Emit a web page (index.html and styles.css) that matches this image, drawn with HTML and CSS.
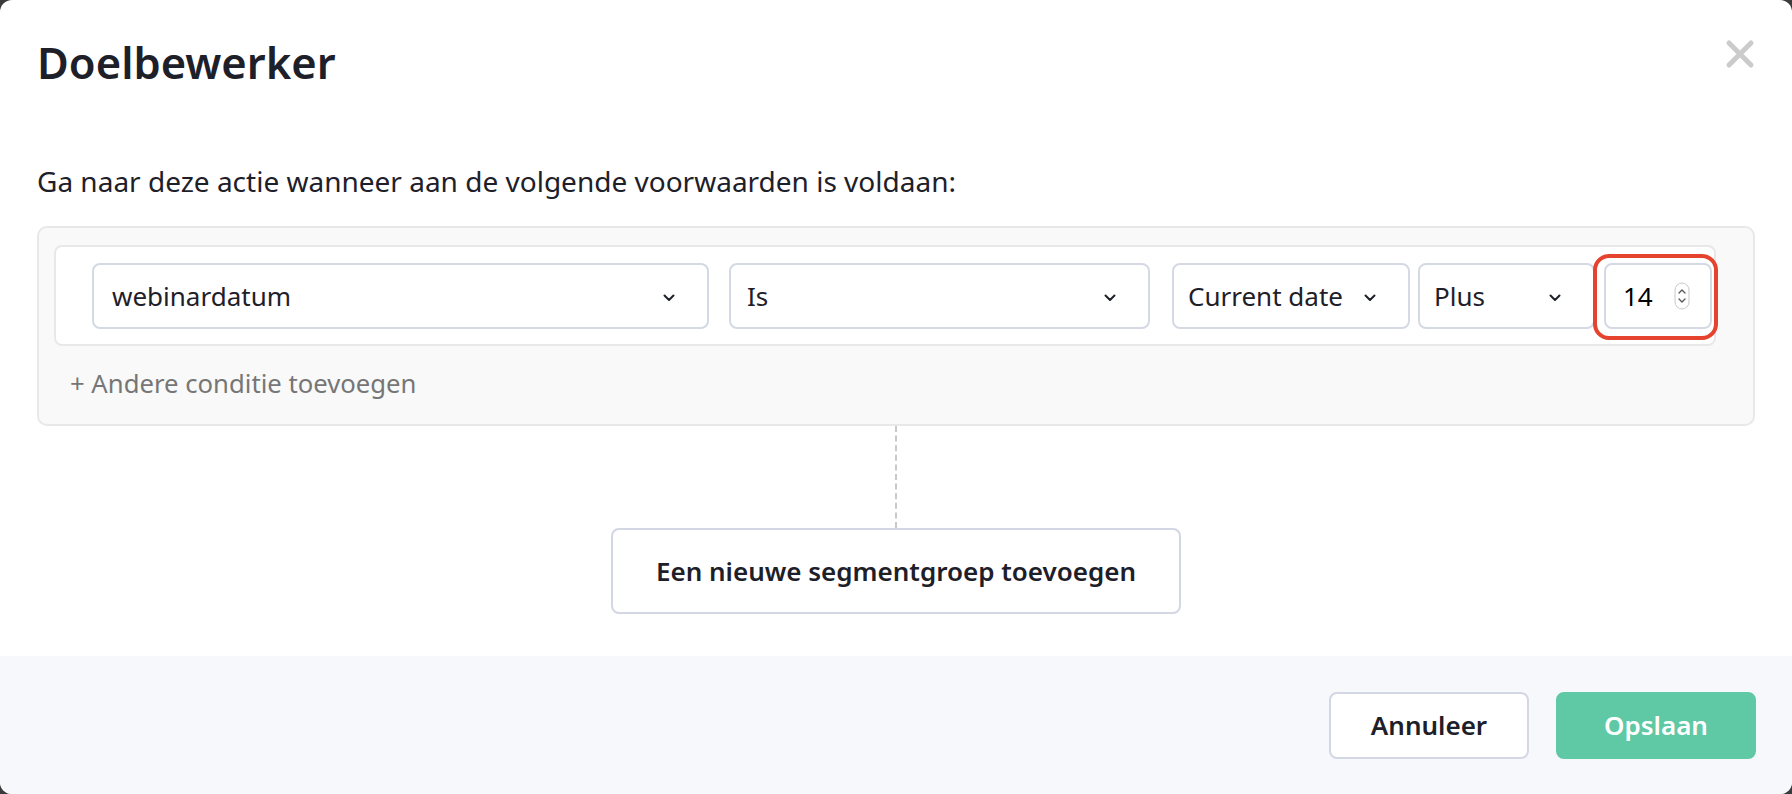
FILE: index.html
```html
<!DOCTYPE html>
<html lang="nl">
<head>
    <meta charset="UTF-8">
    <meta name="viewport" content="width=device-width, initial-scale=1.0">
    <title>Doelbewerker</title>
    <link rel="stylesheet" href="styles.css">
</head>
<body>
    <div class="modal">
        <div class="modal-body">
            <div class="modal-head">
                <h2>Doelbewerker</h2>
                <button class="close" title="Sluiten">
                    <svg width="30" height="30" viewBox="0 0 30 30"><path d="M4 4 L26 26 M26 4 L4 26" stroke="#cbcbcb" stroke-width="5" stroke-linecap="round" fill="none"/></svg>
                </button>
            </div>
            <p class="intro">Ga naar deze actie wanneer aan de volgende voorwaarden is voldaan:</p>

            <div class="group">
                <div class="cond-row">
                    <div class="pick pick-field">
                        <span>webinardatum</span>
                        <svg class="chev" width="12" height="8" viewBox="0 0 12 8"><path d="M1.5 1.5 L6 6 L10.5 1.5"/></svg>
                    </div>
                    <div class="pick pick-op">
                        <span>Is</span>
                        <svg class="chev" width="12" height="8" viewBox="0 0 12 8"><path d="M1.5 1.5 L6 6 L10.5 1.5"/></svg>
                    </div>
                    <div class="pick pick-date">
                        <span>Current date</span>
                        <svg class="chev" width="12" height="8" viewBox="0 0 12 8"><path d="M1.5 1.5 L6 6 L10.5 1.5"/></svg>
                    </div>
                    <div class="pick pick-mod">
                        <span>Plus</span>
                        <svg class="chev" width="12" height="8" viewBox="0 0 12 8"><path d="M1.5 1.5 L6 6 L10.5 1.5"/></svg>
                    </div>
                    <div class="num-wrap">
                        <div class="pick pick-num">
                            <span>14</span>
                            <svg class="spin" width="16" height="28" viewBox="0 0 16 28">
                                <rect x="1" y="1" width="14" height="26" rx="7" fill="#fff" stroke="#c9c9c9" stroke-width="1"/>
                                <path d="M5 11 L8 8 L11 11 M5 17 L8 20 L11 17" stroke="#555" stroke-width="1.3" fill="none" stroke-linecap="round" stroke-linejoin="round"/>
                            </svg>
                        </div>
                        <div class="mark"></div>
                    </div>
                </div>
                <div class="add-cond">+ Andere conditie toevoegen</div>
            </div>

            <div class="connector"></div>
            <div class="center">
                <button class="btn btn-outline btn-wide">Een nieuwe segmentgroep toevoegen</button>
            </div>
        </div>

        <div class="modal-foot">
            <button class="btn btn-outline">Annuleer</button>
            <button class="btn btn-green">Opslaan</button>
        </div>
    </div>
</body>
</html>
```

FILE: styles.css
```css
html, body { margin: 0; height: 100%; }
body { background: #3b3b3b; font-family: "Noto Sans", "Open Sans", Arial, sans-serif; color: #1e2029; }

.modal {
    height: 794px;
    background: #fff;
    border-radius: 12px;
    overflow: hidden;
    display: flex;
    flex-direction: column;
}
.modal-body { flex: 1; padding: 32px 37px 0 37px; }

.modal-head { display: flex; justify-content: space-between; align-items: flex-start; }
.modal-head h2 { margin: 0; font-size: 43.5px; line-height: 60px; font-weight: 600; }
.close { border: none; background: none; padding: 0; margin-top: 7px; width: 30px; height: 30px; cursor: pointer; }
.close svg { display: block; }

.intro { margin: 71px 0 27px 0; font-size: 28px; line-height: 36px; }

.group {
    background: #f9f9f9;
    border: 2px solid #e8e8e8;
    border-radius: 10px;
    padding: 17px 37px 22px 15px;
}
.cond-row {
    display: flex;
    background: #fff;
    border: 2px solid #e8e8e8;
    border-radius: 8px;
    padding: 16px 2px 15px 36px;
}
.pick {
    box-sizing: border-box;
    height: 66px;
    border: 2px solid #d5d9e4;
    border-radius: 8px;
    background: #fff;
    display: flex;
    align-items: center;
    justify-content: space-between;
    padding: 0 32px 0 16px;
    font-size: 26px;
}
.chev { fill: none; stroke: #1e2029; stroke-width: 2; stroke-linecap: round; stroke-linejoin: round; margin-top: 4px; }
.pick-field { width: 617px; padding-left: 18px; }
.pick-op { width: 421px; margin-left: 20px; }
.pick-date { width: 238px; margin-left: 22px; padding-left: 14px; }
.pick-mod { width: 177px; margin-left: 8px; padding-left: 14px; }
.num-wrap { position: relative; width: 108px; margin-left: 9px; }
.pick-num { width: 108px; padding: 0 20px 0 17px; color: #000; }
.spin { display: block; }
/* red rounded frame around the number field */
.mark {
    position: absolute;
    top: -9px; right: -6px; bottom: -11px; left: -11px;
    border: 4px solid #e5432d;
    border-radius: 16px;
    pointer-events: none;
}

.add-cond { margin-top: 20px; padding-left: 16px; font-size: 25.7px; line-height: 36px; color: #767676; }

.connector { width: 0; height: 102px; margin: 0 auto; border-left: 2px dashed #c9c9c9; }
.center { text-align: center; }

.btn {
    box-sizing: border-box;
    font-family: inherit;
    font-size: 26px;
    font-weight: 600;
    border-radius: 8px;
    cursor: pointer;
}
.btn-outline { background: #fff; border: 2px solid #d3d7e4; color: #1e2029; }
.btn-wide { width: 570px; height: 86px; }

.modal-foot {
    height: 138px;
    background: #f7f8fc;
    display: flex;
    justify-content: flex-end;
    align-items: center;
    gap: 27px;
    padding: 0 36px;
}
.modal-foot .btn { width: 200px; height: 67px; }
.btn-green { background: #5fc8a4; border: 2px solid #5fc8a4; color: #fff; }
```
